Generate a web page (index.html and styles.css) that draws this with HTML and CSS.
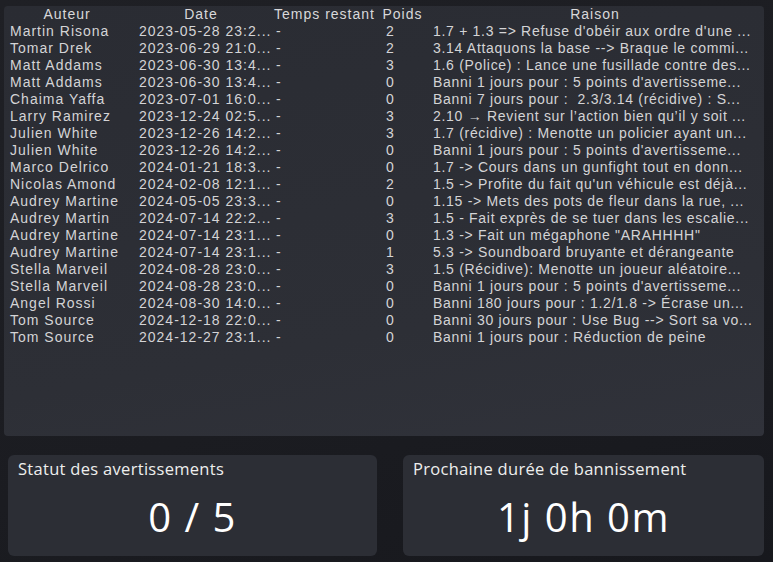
FILE: index.html
```html
<!DOCTYPE html>
<html lang="fr">
<head>
  <meta charset="UTF-8" />
  <title>Sanctions</title>
  <link rel="stylesheet" href="styles.css">
</head>
<body>

  <!-- Historique des sanctions -->
  <div class="panel">
    <table class="sanctions">
      <colgroup>
        <col class="c-author">
        <col class="c-date">
        <col class="c-left">
        <col class="c-weight">
        <col class="c-reason">
      </colgroup>
      <thead>
        <tr>
          <th>Auteur</th>
          <th>Date</th>
          <th>Temps restant</th>
          <th>Poids</th>
          <th>Raison</th>
        </tr>
      </thead>
      <tbody>
        <tr><td>Martin Risona</td><td>2023-05-28 23:2...</td><td>-</td><td>2</td><td>1.7 + 1.3 =&gt; Refuse d'obéir aux ordre d'une ...</td></tr>
        <tr><td>Tomar Drek</td><td>2023-06-29 21:0...</td><td>-</td><td>2</td><td>3.14 Attaquons la base --&gt; Braque le commi...</td></tr>
        <tr><td>Matt Addams</td><td>2023-06-30 13:4...</td><td>-</td><td>3</td><td>1.6 (Police) : Lance une fusillade contre des...</td></tr>
        <tr><td>Matt Addams</td><td>2023-06-30 13:4...</td><td>-</td><td>0</td><td>Banni 1 jours pour : 5 points d'avertisseme...</td></tr>
        <tr><td>Chaima Yaffa</td><td>2023-07-01 16:0...</td><td>-</td><td>0</td><td>Banni 7 jours pour : &nbsp;2.3/3.14 (récidive) : S...</td></tr>
        <tr><td>Larry Ramirez</td><td>2023-12-24 02:5...</td><td>-</td><td>3</td><td>2.10 → Revient sur l’action bien qu’il y soit ...</td></tr>
        <tr><td>Julien White</td><td>2023-12-26 14:2...</td><td>-</td><td>3</td><td>1.7 (récidive) : Menotte un policier ayant un...</td></tr>
        <tr><td>Julien White</td><td>2023-12-26 14:2...</td><td>-</td><td>0</td><td>Banni 1 jours pour : 5 points d'avertisseme...</td></tr>
        <tr><td>Marco Delrico</td><td>2024-01-21 18:3...</td><td>-</td><td>0</td><td>1.7 -&gt; Cours dans un gunfight tout en donn...</td></tr>
        <tr><td>Nicolas Amond</td><td>2024-02-08 12:1...</td><td>-</td><td>2</td><td>1.5 -&gt; Profite du fait qu'un véhicule est déjà...</td></tr>
        <tr><td>Audrey Martine</td><td>2024-05-05 23:3...</td><td>-</td><td>0</td><td>1.15 -&gt; Mets des pots de fleur dans la rue, ...</td></tr>
        <tr><td>Audrey Martin</td><td>2024-07-14 22:2...</td><td>-</td><td>3</td><td>1.5 - Fait exprès de se tuer dans les escalie...</td></tr>
        <tr><td>Audrey Martine</td><td>2024-07-14 23:1...</td><td>-</td><td>0</td><td>1.3 -&gt; Fait un mégaphone "ARAHHHH"</td></tr>
        <tr><td>Audrey Martine</td><td>2024-07-14 23:1...</td><td>-</td><td>1</td><td>5.3 -&gt; Soundboard bruyante et dérangeante</td></tr>
        <tr><td>Stella Marveil</td><td>2024-08-28 23:0...</td><td>-</td><td>3</td><td>1.5 (Récidive): Menotte un joueur aléatoire...</td></tr>
        <tr><td>Stella Marveil</td><td>2024-08-28 23:0...</td><td>-</td><td>0</td><td>Banni 1 jours pour : 5 points d'avertisseme...</td></tr>
        <tr><td>Angel Rossi</td><td>2024-08-30 14:0...</td><td>-</td><td>0</td><td>Banni 180 jours pour : 1.2/1.8 -&gt; Écrase un...</td></tr>
        <tr><td>Tom Source</td><td>2024-12-18 22:0...</td><td>-</td><td>0</td><td>Banni 30 jours pour : Use Bug --&gt; Sort sa vo...</td></tr>
        <tr><td>Tom Source</td><td>2024-12-27 23:1...</td><td>-</td><td>0</td><td>Banni 1 jours pour : Réduction de peine</td></tr>
      </tbody>
    </table>
  </div>

  <!-- Résumé -->
  <div class="stats">
    <div class="card">
      <div class="card-label">Statut des avertissements</div>
      <div class="card-value">0 / 5</div>
    </div>
    <div class="card">
      <div class="card-label">Prochaine durée de bannissement</div>
      <div class="card-value">1j 0h 0m</div>
    </div>
  </div>

</body>
</html>
```

FILE: styles.css
```css
html, body {
  height: 100%;
}

body {
  margin: 0;
  padding: 6px 9px 0 4px;
  box-sizing: border-box;
  background: linear-gradient(160deg, #1f2025 0%, #1b1c21 60%, #17181d 100%);
  color: #d4d4d6;
}

.panel {
  width: 760px;
  height: 430px;
  background: linear-gradient(170deg, #2a2c33 0%, #2d2f36 70%, #30323a 100%);
  border-radius: 4px;
  overflow: hidden;
}

.sanctions {
  width: 758px;
  table-layout: fixed;
  border-collapse: collapse;
  font-family: "Liberation Sans", Arial, sans-serif;
  font-size: 14px;
  letter-spacing: 1px;
}

.c-author { width: 126px; }
.c-date   { width: 142px; }
.c-left   { width: 105px; }
.c-weight { width: 51px; }
.c-reason { width: 334px; }

.sanctions th {
  height: 17px;
  padding: 0;
  font-weight: normal;
  text-align: center;
  white-space: nowrap;
  color: #d8d8da;
  line-height: 17px;
}

.sanctions td {
  height: 17px;
  padding: 0;
  line-height: 17px;
  white-space: nowrap;
  overflow: hidden;
}

.sanctions td:nth-child(1) { padding-left: 6px; }
.sanctions td:nth-child(2) { padding-left: 9px; }
.sanctions td:nth-child(3) { padding-left: 4px; }
.sanctions td:nth-child(4) { padding-left: 9px; }
.sanctions td:nth-child(5) {
  padding-left: 5px;
  letter-spacing: 0.7px;
}

.stats {
  display: grid;
  grid-template-columns: 369px 361px;
  gap: 26px;
  margin: 19px 0 0 4px;
}

.card {
  height: 101px;
  box-sizing: border-box;
  padding: 3px 10px 0;
  background: #2c2e35;
  border-radius: 6px;
  font-family: "Open Sans", sans-serif;
  color: #eeeeee;
}

.card-label {
  font-size: 16.5px;
  line-height: 22px;
  letter-spacing: 0.3px;
}

.card-value {
  margin-top: 14px;
  text-align: center;
  font-size: 40px;
  line-height: 46px;
  letter-spacing: 1.5px;
  color: #ffffff;
}
```
